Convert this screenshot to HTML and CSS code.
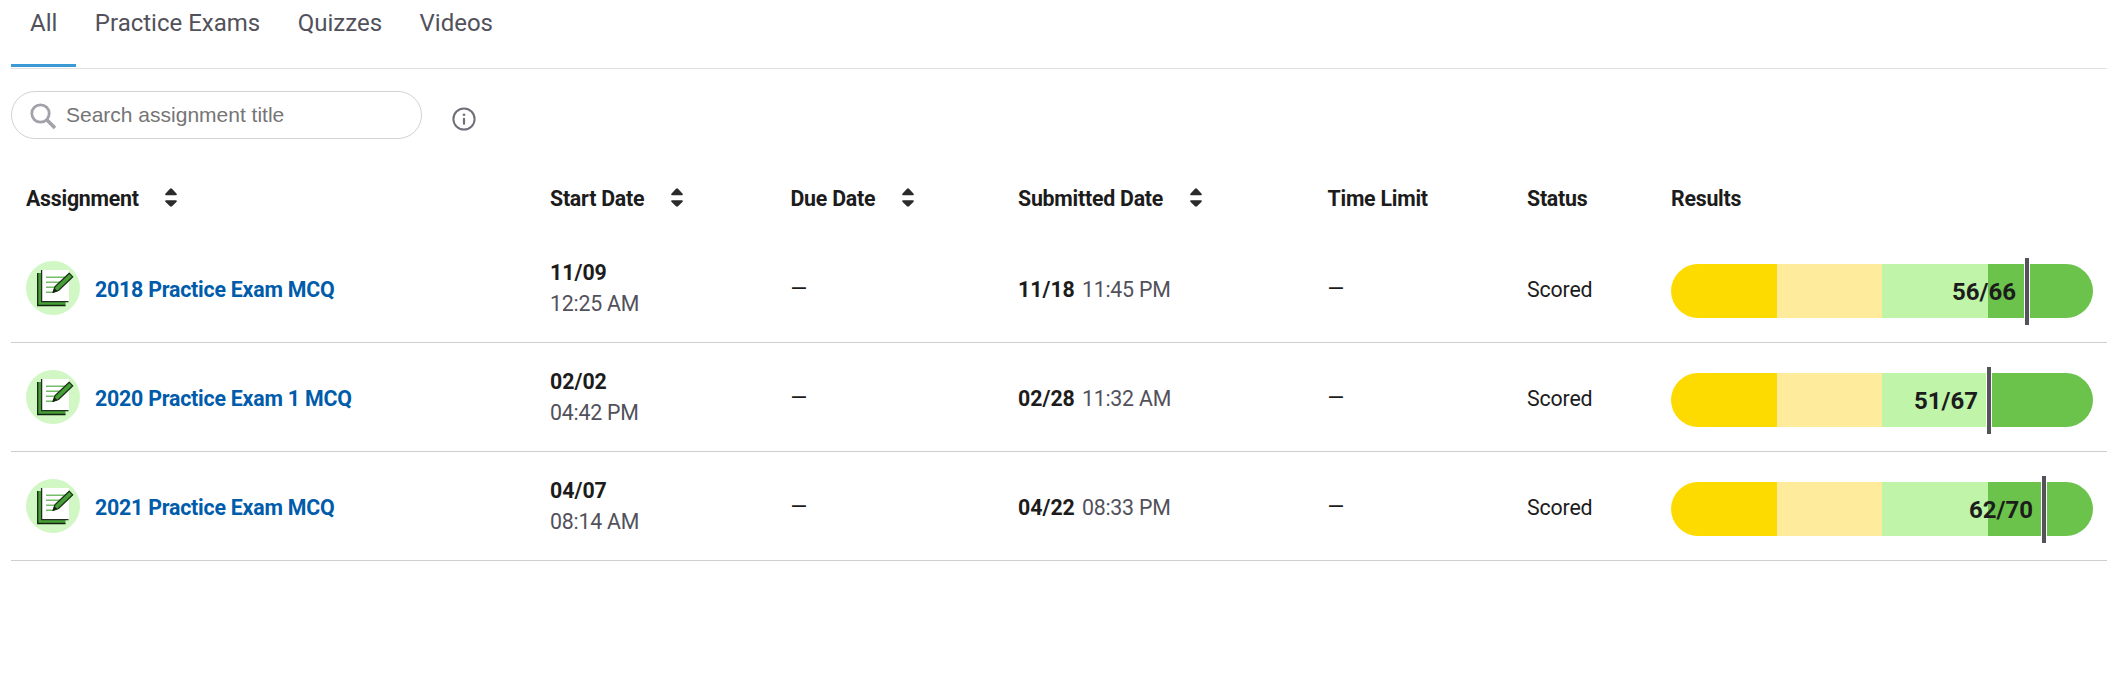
FILE: index.html
```html
<!DOCTYPE html>
<html lang="en">
<head>
<meta charset="utf-8">
<title>Assignments</title>
<link rel="stylesheet" href="styles.css">
</head>
<body>
<svg class="defs" width="0" height="0" aria-hidden="true">
  <symbol id="sort" viewBox="0 0 12 20">
    <path d="M1 7.2Q-.4 7 .6 5.500L5 .7Q6 -.2 7 .7L11.400 5.500Q12.400 7 11 7.200ZM1 12.200Q-.4 12.400 .6 13.900L5 18.300Q6 19.200 7 18.300L11.400 13.900Q12.400 12.400 11 12.200Z" fill="#2b2b2d"/>
  </symbol>
  <symbol id="exam" viewBox="0 0 54 54">
    <circle cx="27" cy="27" r="27" fill="#d1f8c4"/>
    <path d="M11.500 12H16V40.500H39.500V44.500H11.500Z" fill="#46a037"/>
    <path d="M11.700 12V44.500H39.500" fill="none" stroke="#14230f" stroke-width="1.300"/>
    <path d="M15.500 9H43V40.500H15.500Z" fill="#fff"/>
    <path d="M15.600 9V40.600H42.500" fill="none" stroke="#222f20" stroke-width="1.300"/>
    <path d="M20 16.200H39M20 21.200H36M20 26.200H31M20 31.300H27" stroke="#76bd6a" stroke-width="1.500"/>
    <path d="M27 31.500L29 25.800L43.200 12.200L46.800 15.800L32.500 29.500Z" fill="#46a037" stroke="#1b3015" stroke-width="1.200" stroke-linejoin="round"/>
    <path d="M26.700 31.800L28.300 27L31.500 30.300Z" fill="#14230f"/>
  </symbol>
</svg>
<main class="page">
  <nav class="tabs">
    <a class="tab active">All</a>
    <a class="tab">Practice Exams</a>
    <a class="tab">Quizzes</a>
    <a class="tab">Videos</a>
  </nav>
  <div class="tools">
    <label class="search">
      <svg width="27" height="27" viewBox="0 0 27 27" fill="none" stroke="#a3a2ab"><circle cx="10.500" cy="10.500" r="8.700" stroke-width="2.800"/><path d="M16.700 16.700L25 25" stroke-width="3.600"/></svg>
      <input class="field" type="text" placeholder="Search assignment title">
    </label>
    <svg class="info" width="24" height="24" viewBox="0 0 24 24"><circle cx="12" cy="12" r="10.600" fill="none" stroke="#6f6e79" stroke-width="2"/><circle cx="12" cy="7.700" r="1.300" fill="#6f6e79"/><path d="M12 11.800V16.800" stroke="#6f6e79" stroke-width="2.200" stroke-linecap="round"/></svg>
  </div>
  <section class="table">
    <div class="row head">
      <div class="cell">Assignment<svg class="sort"><use href="#sort"/></svg></div>
      <div class="cell">Start Date<svg class="sort"><use href="#sort"/></svg></div>
      <div class="cell">Due Date<svg class="sort"><use href="#sort"/></svg></div>
      <div class="cell">Submitted Date<svg class="sort"><use href="#sort"/></svg></div>
      <div class="cell">Time Limit</div>
      <div class="cell">Status</div>
      <div class="cell">Results</div>
    </div>
    <div class="row">
      <div class="cell"><svg class="exam"><use href="#exam"/></svg><a class="link">2018 Practice Exam MCQ</a></div>
      <div class="cell stack"><b>11/09</b><span class="time">12:25 AM</span></div>
      <div class="cell"><span class="none">—</span></div>
      <div class="cell inline"><b>11/18</b><span class="time">11:45 PM</span></div>
      <div class="cell"><span class="none">—</span></div>
      <div class="cell status">Scored</div>
      <div class="cell"><div class="bar"><i class="s1"></i><i class="s2"></i><i class="s3"></i><i class="s4"></i><div class="mark" style="width:83.650%"><span class="score">56/66</span></div></div></div>
    </div>
    <div class="row">
      <div class="cell"><svg class="exam"><use href="#exam"/></svg><a class="link">2020 Practice Exam 1 MCQ</a></div>
      <div class="cell stack"><b>02/02</b><span class="time">04:42 PM</span></div>
      <div class="cell"><span class="none">—</span></div>
      <div class="cell inline"><b>02/28</b><span class="time">11:32 AM</span></div>
      <div class="cell"><span class="none">—</span></div>
      <div class="cell status">Scored</div>
      <div class="cell"><div class="bar"><i class="s1"></i><i class="s2"></i><i class="s3"></i><i class="s4"></i><div class="mark" style="width:74.645%"><span class="score">51/67</span></div></div></div>
    </div>
    <div class="row">
      <div class="cell"><svg class="exam"><use href="#exam"/></svg><a class="link">2021 Practice Exam MCQ</a></div>
      <div class="cell stack"><b>04/07</b><span class="time">08:14 AM</span></div>
      <div class="cell"><span class="none">—</span></div>
      <div class="cell inline"><b>04/22</b><span class="time">08:33 PM</span></div>
      <div class="cell"><span class="none">—</span></div>
      <div class="cell status">Scored</div>
      <div class="cell"><div class="bar"><i class="s1"></i><i class="s2"></i><i class="s3"></i><i class="s4"></i><div class="mark" style="width:87.680%"><span class="score">62/70</span></div></div></div>
    </div>
  </section>
</main>
</body>
</html>
```
FILE: styles.css
```css
*, *::after { box-sizing: border-box; }
body { margin: 0; background: #fff; color: #1c1c1c; font: 21.330px/31px Roboto, sans-serif; }
.defs { display: block; height: 0; }
.page { width: 2096px; margin-left: 11px; }

.tabs { display: flex; height: 69px; border-bottom: 1px solid #e1e1e3; }
.tab { height: 67px; padding: 7px 19px 0 18.500px; color: #52515b; font-size: 24px; line-height: 32px; }
.active { padding-left: 19px; border-bottom: 3px solid #3b9ad6; }

.tools { display: flex; padding-top: 22px; height: 96px; }
.search { display: flex; align-items: flex-start; width: 411px; height: 48px; padding: 11px 0 0 18px; border: 1px solid #d2d2d4; border-radius: 24px; }
.field { flex: 1; margin: -1px 0 0 9px; padding: 0; border: 0; outline: 0; height: 26px; background: transparent; font: 21px "Liberation Sans", Arial, sans-serif; }
.field::placeholder { color: #757575; }
.info { margin: 15.500px 0 0 30px; }

.row { display: grid; grid-template-columns: 524px 240.500px 227.500px 309.500px 199.500px 144px 1fr; height: 109px; padding-left: 15px; border-bottom: 1px solid #cfcfd3; }
.cell { display: flex; align-items: center; }
.head { height: 69px; padding-bottom: 2px; border: 0; font-weight: 700; letter-spacing: -.24px; }
.sort { width: 12px; height: 20px; margin: -1px 0 0 26.500px; }
.exam { width: 54px; height: 54px; margin-right: 15px; }
.link { color: #005cab; font-weight: 700; letter-spacing: -.21px; margin-top: 2px; }
.stack { flex-direction: column; justify-content: center; align-items: flex-start; }
.inline { gap: 7px; padding-top: 2px; }
.time { color: #52515b; letter-spacing: -.22px; }
.none { display: block; }
.status { letter-spacing: -.15px; padding-top: 2px; }

.bar { position: relative; display: flex; width: 422px; height: 54px; margin-top: 6px; }
.s1 { width: 106px; background: #fedb00; border-radius: 27px 0 0 27px; }
.s2 { width: 105px; background: #ffeb9c; }
.s3 { width: 106px; background: #bff4a9; }
.s4 { width: 105px; background: #6bc34b; border-radius: 0 27px 27px 0; }
.mark { position: absolute; top: -6px; left: 0; height: 67px; display: flex; align-items: center; justify-content: flex-end; padding: 1px 8px 0 0; }
.mark::after { content: ""; position: absolute; left: 100%; top: 0; width: 6px; height: 67px; background: #54535c; border: solid #fff; border-width: 0 1px; }
.score { font-size: 24px; font-weight: 700; }
```
